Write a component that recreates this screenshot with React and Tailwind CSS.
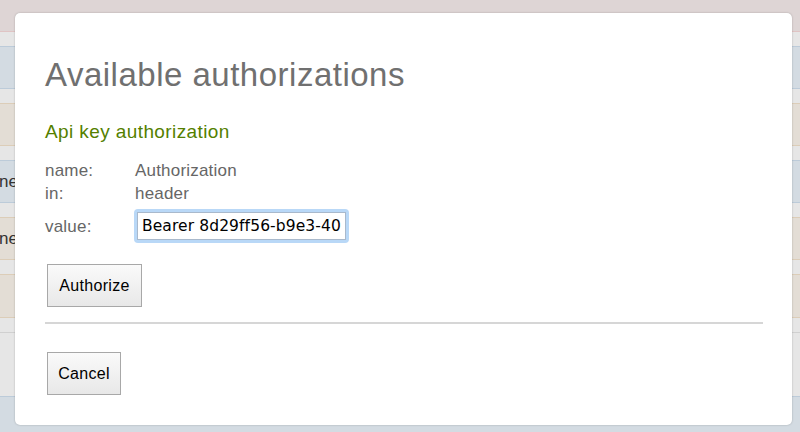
import React from "react";

export default function App() {
  return (
    <div className="relative w-[800px] h-[432px] overflow-hidden bg-[#d3dbe2] font-['Liberation_Sans',Arial,sans-serif]">
      <div className="flex flex-col">
        <div className="h-[31px] bg-[#ded5d5]" />
        <div className="h-px bg-[#e0c4c4]" />
        <div className="h-[14px] bg-[#e6e6e6]" />
        <div className="h-[43px] bg-[#d3dbe2] border-y border-[#bccbd9]" />
        <div className="h-[14px] bg-[#e6e6e6]" />
        <div className="h-[43px] bg-[#e3ddd5] border-y border-[#dccdb8]" />
        <div className="h-[14px] bg-[#e6e6e6]" />
        <div className="h-[43px] bg-[#d3dbe2] border-y border-[#bccbd9] flex items-center text-[17px] text-[#333] leading-none">
          <span className="-ml-[1px]">ne</span>
        </div>
        <div className="h-[14px] bg-[#e6e6e6]" />
        <div className="h-[43px] bg-[#e3ddd5] border-y border-[#dccdb8] flex items-center text-[17px] text-[#333] leading-none">
          <span className="-ml-[1px]">ne</span>
        </div>
        <div className="h-[14px] bg-[#e6e6e6]" />
        <div className="h-[44px] bg-[#e3ddd5] border-y border-[#dccdb8]" />
        <div className="h-[14px] bg-[#e6e6e6]" />
        <div className="h-[64px] bg-[#e6e6e6] border-t border-[#d0d0d0] flex items-center justify-end text-[17px] text-[#888]">
          <span className="mr-[-6px]">(</span>
        </div>
        <div className="h-[34px] bg-[#d3dbe2] border-t border-[#bccbd9]" />
      </div>

      <div className="absolute left-[15px] top-[13px] w-[777px] h-[412px] bg-white rounded-[5px] shadow-[0_0_2px_rgba(0,0,0,0.25)] pl-[30px] pr-[29px] pt-[43px]">
        <h2 className="text-[33px] leading-[38px] tracking-[0.5px] text-[#707070] font-normal">Available authorizations</h2>
        <h3 className="mt-[27px] text-[19px] leading-[22px] tracking-[0.4px] text-[#547f00] font-normal">Api key authorization</h3>
        <div className="mt-[16px] text-[17px] tracking-[0.2px] text-[#666] leading-[23px]">
          <div className="flex"><span className="w-[90px]">name:</span><span>Authorization</span></div>
          <div className="flex"><span className="w-[90px]">in:</span><span>header</span></div>
          <div className="flex items-center mt-[4px]">
            <span className="w-[89px]">value:</span>
            <div className="rounded-[4px] p-[3px] bg-[#b9d8f7]">
              <input
                readOnly
                value="Bearer 8d29ff56-b9e3-40"
                className="block w-[209px] h-[28px] bg-white border border-[#a9b9cc] px-[4px] text-[15.5px] tracking-[0.1px] text-black outline-none font-['DejaVu_Sans',sans-serif]"
              />
            </div>
          </div>
        </div>
        <button className="block mt-[21px] ml-[2px] w-[95px] h-[43px] border border-[#a8a8a8] bg-gradient-to-b from-[#fafafa] to-[#e8e8e8] text-[16px] tracking-[0.3px] text-black">
          Authorize
        </button>
        <div className="mt-[15px] h-[2px] bg-[#d6d6d6]" />
        <button className="block mt-[28px] ml-[2px] w-[74px] h-[43px] border border-[#a8a8a8] bg-gradient-to-b from-[#fafafa] to-[#e8e8e8] text-[16px] tracking-[0.3px] text-black">
          Cancel
        </button>
      </div>
    </div>
  );
}
